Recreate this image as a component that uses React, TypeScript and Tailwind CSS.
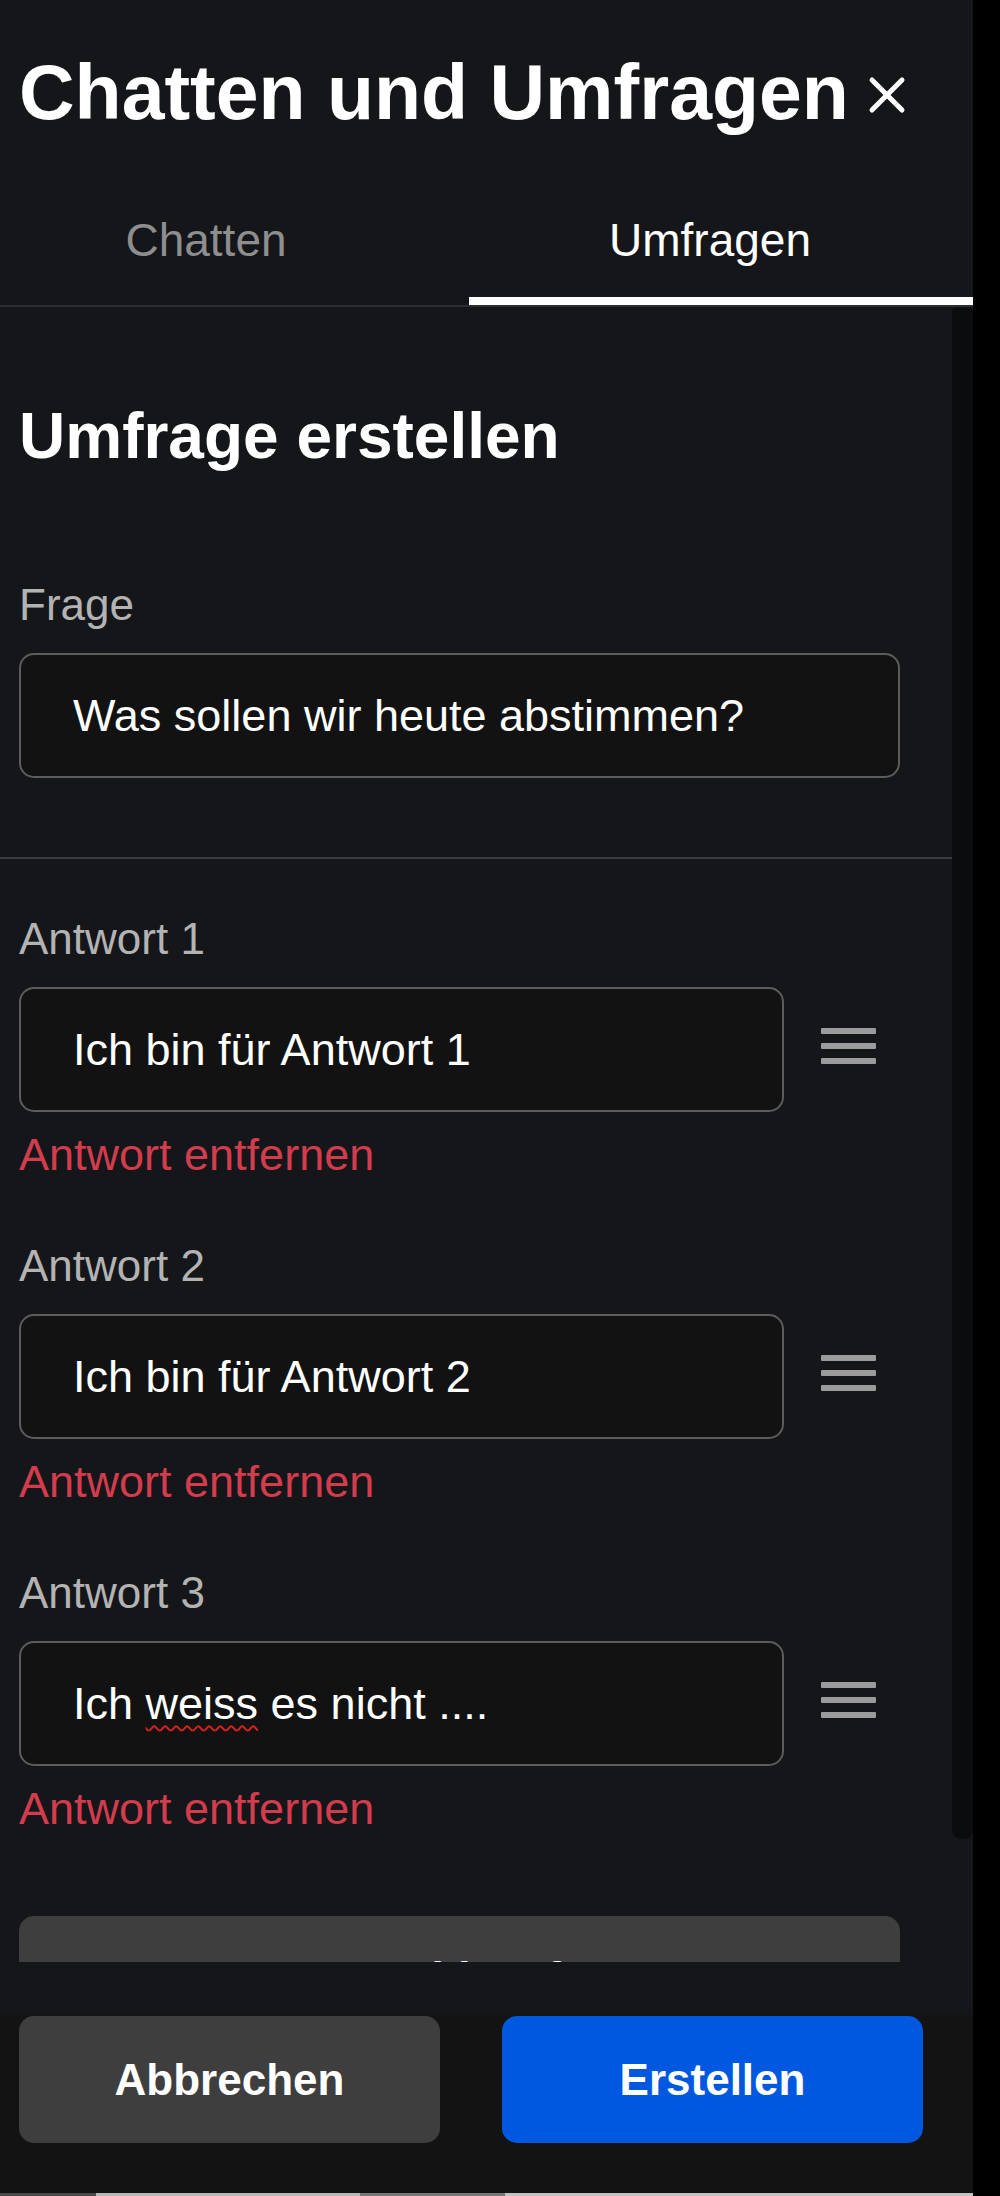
import { X } from 'lucide-react';

const font = { fontFamily: '"Liberation Sans", Arial, sans-serif' };

function DragHandle() {
  return (
    <div className="mt-[41px] flex w-[55px] flex-col gap-[9px]">
      <div className="h-[6px] rounded-[1px] bg-[#9b9b9b]" />
      <div className="h-[6px] rounded-[1px] bg-[#9b9b9b]" />
      <div className="h-[6px] rounded-[1px] bg-[#9b9b9b]" />
    </div>
  );
}

function AnswerBlock({ index, children }: { index: number; children: React.ReactNode }) {
  return (
    <div className="flex shrink-0 flex-col">
      <div className="h-[44px] text-[44px] leading-[44px] text-[#b3b3b3]">Antwort {index}</div>
      <div className="mt-[26px] flex gap-[37px]">
        <div className="flex h-[125px] w-[765px] items-center rounded-[15px] border-2 border-[#5c5c5c] bg-[#121212] pl-[52px] text-[45px] leading-[44px] text-white">
          {children}
        </div>
        <DragHandle />
      </div>
      <div className="mt-[21px] h-[44px] text-[45px] leading-[44px] text-[#d33c4d]">Antwort entfernen</div>
    </div>
  );
}

export default function App() {
  return (
    <div className="flex h-[2196px] w-full bg-black" style={font}>
      <div className="flex w-[973px] flex-col bg-[#15161a]">
        {/* Header */}
        <div className="flex h-[160px] shrink-0 items-start pl-[19px] pt-[54px]">
          <h1 className="h-[77px] text-[77px] font-bold leading-[77px] text-white">Chatten und Umfragen</h1>
          <X className="ml-[8px] mt-[11px] text-white" size={60} strokeWidth={2} />
        </div>

        {/* Tabs */}
        <div className="flex h-[147px] shrink-0 border-b-2 border-[#2c2d30]">
          <div className="flex w-[469px] flex-col pr-[57px] pt-[58px]">
            <span className="h-[44px] text-center text-[46px] leading-[44px] text-[#8e8e8e]">Chatten</span>
          </div>
          <div className="flex flex-1 flex-col pt-[58px]">
            <span className="h-[44px] pr-[22px] text-center text-[46px] leading-[44px] text-white">Umfragen</span>
            <div className="mt-auto h-[8px] bg-white" />
          </div>
        </div>

        {/* Scroll area */}
        <div className="flex h-[1655px] shrink-0 overflow-hidden">
          <div className="flex flex-1 flex-col pt-[98px]">
            <h2 className="ml-[19px] h-[63px] shrink-0 text-[64px] font-bold leading-[63px] text-white">Umfrage erstellen</h2>

            <div className="ml-[19px] mt-[115px] h-[44px] shrink-0 text-[44px] leading-[44px] text-[#b3b3b3]">Frage</div>
            <div className="ml-[19px] mt-[26px] flex h-[125px] w-[881px] shrink-0 items-center rounded-[15px] border-2 border-[#5c5c5c] bg-[#121212] pl-[52px] text-[45px] leading-[44px] text-white">
              Was sollen wir heute abstimmen?
            </div>

            <div className="mt-[79px] h-[2px] shrink-0 bg-[#3a3b3e]" />

            <div className="ml-[19px] mt-[58px] flex shrink-0 flex-col gap-[67px]">
              <AnswerBlock index={1}>Ich bin für Antwort 1</AnswerBlock>
              <AnswerBlock index={2}>Ich bin für Antwort 2</AnswerBlock>
              <AnswerBlock index={3}>
                <span>
                  Ich{' '}
                  <span className="underline decoration-[#e0201f] decoration-wavy decoration-[2px] underline-offset-[6px]">weiss</span>{' '}
                  es nicht ....
                </span>
              </AnswerBlock>
            </div>

            <button className="ml-[19px] mt-[85px] flex h-[127px] w-[881px] shrink-0 items-center justify-center rounded-[15px] bg-[#3e3e3e] pb-[3px] text-[44px] font-bold leading-[44px] text-white">
              Antwort hinzufügen
            </button>
          </div>
          <div className="w-[21px] pt-[1px]">
            <div className="h-[1531px] rounded-b-[9px] rounded-t-[4px] bg-[#0b0c0e]" />
          </div>
        </div>

        <div className="h-[53px] shrink-0" />

        {/* Footer */}
        <div className="flex h-[178px] shrink-0 gap-[62px] bg-[#131313] pl-[19px] pt-[1px]">
          <button className="flex h-[127px] w-[421px] items-center justify-center rounded-[15px] bg-[#3e3e3e] text-[44px] font-bold leading-[44px] text-white">
            Abbrechen
          </button>
          <button className="flex h-[127px] w-[421px] items-center justify-center rounded-[15px] bg-[#0158e0] text-[44px] font-bold leading-[44px] text-white">
            Erstellen
          </button>
        </div>

        <div className="flex h-[3px] shrink-0">
          <div className="w-[96px] bg-[#4a4a4a]" />
          <div className="w-[264px] bg-[#b8b8b8]" />
          <div className="w-[145px] bg-[#777777]" />
          <div className="flex-1 bg-[#c2c2c2]" />
        </div>
      </div>
    </div>
  );
}
